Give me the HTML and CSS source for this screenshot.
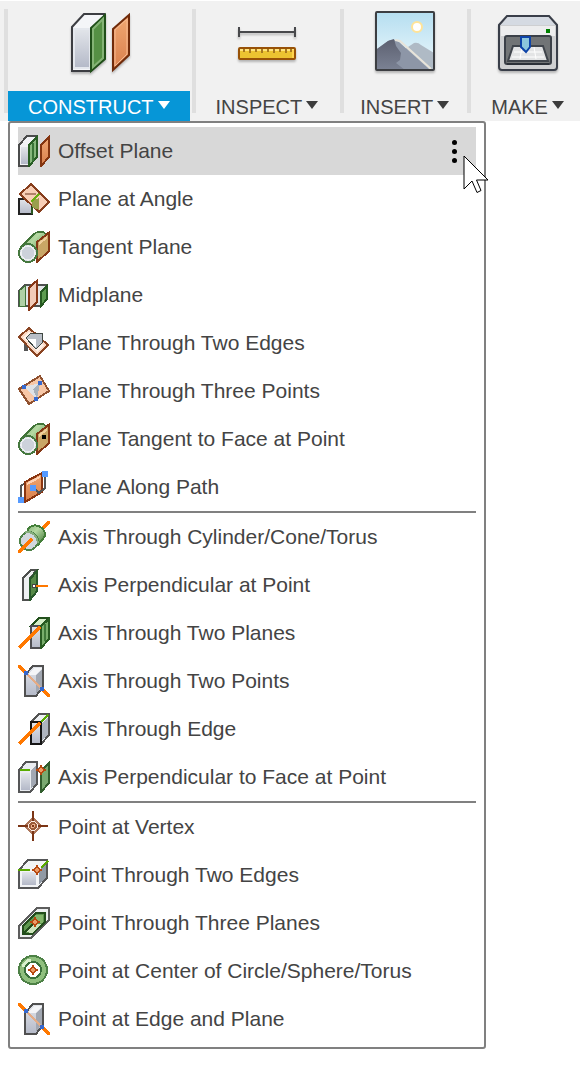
FILE: index.html
```html
<!DOCTYPE html>
<html lang="en">
<head>
  <meta charset="UTF-8">
  <meta name="viewport" content="width=device-width, initial-scale=1.0">
  <title>Construct Menu</title>
  <link rel="stylesheet" href="styles.css">
</head>
<body>
  <!-- shared gradients and symbols -->
  <svg class="defs" width="0" height="0" aria-hidden="true">
    <defs>
      <linearGradient id="steel" x1="0" y1="0" x2="0" y2="1"><stop offset="0" stop-color="#e2e5ea"/><stop offset="1" stop-color="#b4b9c8"/></linearGradient>
      <linearGradient id="copper" x1="0" y1="0" x2="0" y2="1"><stop offset="0" stop-color="#f0a873"/><stop offset="1" stop-color="#d97f4c"/></linearGradient>
      <linearGradient id="sky" x1="0" y1="0" x2="0" y2="1"><stop offset="0" stop-color="#b5def0"/><stop offset="1" stop-color="#eef9fd"/></linearGradient>
      <linearGradient id="rock" x1="0" y1="0" x2="0" y2="1"><stop offset="0" stop-color="#5c6070"/><stop offset="1" stop-color="#7b8294"/></linearGradient>
      <linearGradient id="tube" x1="0" y1="0" x2="1" y2="1"><stop offset="0" stop-color="#7fae70"/><stop offset=".4" stop-color="#b5d9a2"/><stop offset="1" stop-color="#39702f"/></linearGradient>
    </defs>
    <symbol id="target" viewBox="0 0 10 10">
      <path d="M5 0v10M0 5h10" stroke="#b8480f" stroke-width="2"/>
      <path d="M5 1.500 8.500 5 5 8.500 1.500 5z" fill="#eb9c68" stroke="#b8480f" stroke-width="2"/>
    </symbol>
    <symbol id="two-points" viewBox="0 0 32 32">
      <path d="M7 10 15 1H25V22L18 31H7z" fill="url(#steel)" stroke="#505050" stroke-width="2"/>
      <path d="M9 10 16 3h8l-6 7z" fill="#f4f5f7"/>
      <path d="M18 10 24 4v17l-6 8z" fill="#a1a7b1"/>
      <path d="M10 10 23 23" stroke="#e5ac85" stroke-width="2"/>
      <path d="M0 0 7 7M25 25l7 7" stroke="#ff7800" stroke-width="3"/>
      <path d="M6 6h4v4H6zM22 22h4v4h-4z" fill="#3569cf"/>
    </symbol>
    <symbol id="tangent" viewBox="0 0 32 32">
      <path d="M3 16 16 3Q20 0 25 1l3 2v13L16 29z" fill="url(#tube)" stroke="#417438" stroke-width="1.500"/>
      <path d="M19 11 31 1.500V20L19 31z" fill="#c9a666" stroke="#843714" stroke-width="2"/>
      <path d="M21 13 29 6" stroke="#f0ce9d" stroke-width="2"/>
      <circle cx="10" cy="22" r="9" fill="#cdd2db" stroke="#45783e" stroke-width="2"/>
      <circle cx="10" cy="22" r="7" fill="none" stroke="#edf0f2" stroke-width="1.500"/>
    </symbol>
  </svg>

  <nav class="toolbar" aria-label="Tools">
    <button class="tool tool--active" type="button">
      <svg class="tool__icon" viewBox="0 0 64 64">
        <path d="M5 16 17 3H37V48L24 60H5z" fill="#f4f5f8" stroke="#3c3d42" stroke-width="2"/>
        <path d="M7 18H23V57H7z" fill="url(#steel)" stroke="#e4e7ed" stroke-width="2"/>
        <path d="M24 17 38 4V48L24 60z" fill="#559044" stroke="#204f19" stroke-width="2"/>
        <path d="M26 18 36 8V47L26 56z" fill="none" stroke="#84b375" stroke-width="2"/>
        <path d="M46 18 62 4V44L46 59z" fill="url(#copper)" stroke="#702b0a" stroke-width="2"/>
        <path d="M48 19 60 8V43L48 55z" fill="none" stroke="#f6ba92" stroke-width="1"/>
      </svg>
      <span class="tool__label">CONSTRUCT <i class="caret"></i></span>
    </button>
    <button class="tool" type="button">
      <svg class="tool__icon" viewBox="0 0 64 64">
        <path d="M3 21H61M4 16V26M60 16V26" fill="none" stroke="#48494c" stroke-width="2"/>
        <rect x="4" y="37" width="56" height="11" rx="1" fill="#ecc331" stroke="#985207" stroke-width="2"/>
        <path d="M5 39H59" stroke="#ffe37d" stroke-width="2"/>
        <path d="M9 38v3M15 38v4M21 38v3M27 38v4M33 38v3M39 38v4M45 38v3M51 38v4M56 38v3" stroke="#a77720" stroke-width="2"/>
        <path d="M58 39V47" stroke="#ffd24e" stroke-width="2"/>
      </svg>
      <span class="tool__label">INSPECT <i class="caret"></i></span>
    </button>
    <button class="tool tool--narrow" type="button">
      <svg class="tool__icon" viewBox="0 0 64 64">
        <rect x="3" y="1" width="58" height="58" rx="1" fill="url(#sky)"/>
        <circle cx="44" cy="16" r="5" fill="#fff" stroke="#ffe398" stroke-width="2"/>
        <path d="M32 38 41 32Q45 31 48 34L61 42V58H32z" fill="#afbac5"/>
        <path d="M4 38 15 30Q20 27 26 31L57 59H4z" fill="#8d96a7"/>
        <path d="M4 38 15 30 21 28 23 35 28 42 27 49 23 52 32 59H4z" fill="url(#rock)"/>
        <path d="M22 29 27 30 58 58" fill="none" stroke="#e8e4da" stroke-width="2"/>
        <rect x="3" y="1" width="58" height="58" rx="1" fill="none" stroke="#3c3e42" stroke-width="2"/>
      </svg>
      <span class="tool__label">INSERT <i class="caret"></i></span>
    </button>
    <button class="tool" type="button">
      <svg class="tool__icon" viewBox="0 0 64 64">
        <path d="M3 14 11 5H53L61 14V56Q61 59 58 59H6Q3 59 3 56z" fill="#cecfd1" stroke="#393e49" stroke-width="2"/>
        <path d="M5 14 12 6H52L59 14z" fill="#d5dae2"/>
        <path d="M5 15H59V25H5z" fill="#ededee"/>
        <rect x="9" y="25" width="46" height="28" rx="2" fill="#717476" stroke="#3b4048" stroke-width="2"/>
        <path d="M12 50 17 35H47L52 50z" fill="#e3e4e5" stroke="#40454c" stroke-width="2"/>
        <path d="M18 41H46M16 46H48M26 36 24 48M38 36 40 48" fill="none" stroke="#fff"/>
        <path d="M25 26H34V36L30 41 25 36z" fill="#8cc6dc" stroke="#0d43a7" stroke-width="2"/>
        <path d="M11 53H53" stroke="#2b3038" stroke-width="2"/>
        <rect x="50" y="18" width="4" height="4" fill="#008000"/>
      </svg>
      <span class="tool__label">MAKE <i class="caret"></i></span>
    </button>
  </nav>

  <div class="menu" role="menu" aria-label="Construct">
    <div class="menu__group">
      <div class="menu__row menu__row--active">
        <button class="menu__item" type="button" role="menuitem">
          <svg class="menu__icon" viewBox="0 0 32 32">
            <path d="M1 10 9 1H19V22L11 31H1z" fill="#f1f2f5" stroke="#4b4c4c" stroke-width="2"/>
            <path d="M3 12h7v17H3z" fill="url(#steel)"/>
            <path d="M11 10 19 2V22L11 31z" fill="#86b77b" stroke="#285d23" stroke-width="2"/>
            <path d="M15 8V26" stroke="#397436" stroke-width="2"/>
            <path d="M23 10 31 2V22L23 31z" fill="url(#copper)" stroke="#843510" stroke-width="2"/>
          </svg>
          Offset Plane
        </button>
        <button class="more" type="button" aria-label="More options"><i></i><i></i><i></i></button>
        <svg class="cursor" viewBox="0 0 26 40" aria-hidden="true">
          <path d="M1 1V34L9 26 14 37.500 18 35.500 13.500 25H25z" fill="#fff" stroke="#000"/>
        </svg>
      </div>
      <div class="menu__row">
        <button class="menu__item" type="button" role="menuitem">
          <svg class="menu__icon" viewBox="0 0 32 32">
            <path d="M1 16H14V31H1z" fill="url(#steel)" stroke="#222" stroke-width="2"/>
            <path d="M13 1 31 19 21 29 2 11z" fill="#f8ceb6" stroke="#873e1d" stroke-width="2"/>
            <path d="M14 18 21 15V27L14 24z" fill="#9a9e4e"/>
            <path d="M7 11H18" stroke="#b18169" stroke-width="2"/>
            <path d="M13 19 21 11" stroke="#69ad11" stroke-width="2"/>
            <path d="M14 24V31" stroke="#28561f" stroke-width="2"/>
          </svg>
          Plane at Angle
        </button>
      </div>
      <div class="menu__row">
        <button class="menu__item" type="button" role="menuitem">
          <svg class="menu__icon"><use href="#tangent"/></svg>
          Tangent Plane
        </button>
      </div>
      <div class="menu__row">
        <button class="menu__item" type="button" role="menuitem">
          <svg class="menu__icon" viewBox="0 0 32 32">
            <path d="M1 12 7 6H29V20L23 27H1z" fill="#e2e5e8" stroke="#4f5150" stroke-width="2"/>
            <path d="M1 12 7 7V27H1z" fill="#afd0a6" stroke="#3f7339" stroke-width="1"/>
            <path d="M23 13 29 7V20L23 27z" fill="#5c9c4f" stroke="#255820" stroke-width="2"/>
            <path d="M11 9 19 1.500V23L11 31z" fill="#f1cbb8" stroke="#873716" stroke-width="2"/>
          </svg>
          Midplane
        </button>
      </div>
      <div class="menu__row">
        <button class="menu__item" type="button" role="menuitem">
          <svg class="menu__icon" viewBox="0 0 32 32">
            <path d="M6 16H10V24H6z" fill="#555"/>
            <path d="M11 1 30 18 19 29 1 10z" fill="#fbd8c3" stroke="#8a4422" stroke-width="2"/>
            <path d="M11 5 26 18 19 25 5 10z" fill="#fff1e8"/>
            <path d="M8 11 13 6H24V16L18 22z" fill="#b9bfc8" stroke="#3f4742" stroke-width="1"/>
            <path d="M9 12H18V20z" fill="#fff"/>
          </svg>
          Plane Through Two Edges
        </button>
      </div>
      <div class="menu__row">
        <button class="menu__item" type="button" role="menuitem">
          <svg class="menu__icon" viewBox="0 0 32 32">
            <path d="M22 1 31 16 11 29 1 14z" fill="#f7c7a7" stroke="#90512f" stroke-width="2"/>
            <path d="M6 12 22 8 19 24z" fill="#dfe2e6"/>
            <path d="M15 14 22 8 19 24z" fill="#a8b2bc"/>
            <path d="M4 10h4v4H4zM20 6h4v4h-4zM16 22h4v4h-4z" fill="#3569cf"/>
          </svg>
          Plane Through Three Points
        </button>
      </div>
      <div class="menu__row">
        <button class="menu__item" type="button" role="menuitem">
          <svg class="menu__icon" viewBox="0 0 32 32">
            <use href="#tangent"/>
            <path d="M24 12h4v4h-4z" fill="#000"/>
          </svg>
          Plane Tangent to Face at Point
        </button>
      </div>
      <div class="menu__row">
        <button class="menu__item" type="button" role="menuitem">
          <svg class="menu__icon" viewBox="0 0 32 32">
            <path d="M3 26V15L7 12" fill="none" stroke="#555" stroke-width="2"/>
            <path d="M7 11 24 2V21L7 31z" fill="url(#copper)" stroke="#8a3510" stroke-width="2"/>
            <path d="M9 13 22 6" stroke="#ffd3b6" stroke-width="2"/>
            <path d="M17 18 21 22 27 17V6" fill="none" stroke="#555" stroke-width="2"/>
            <path d="M0 26h6v6H0zM24 0h6v6h-6zM12 14h6v6h-6z" fill="#559aff"/>
          </svg>
          Plane Along Path
        </button>
      </div>
    </div>

    <div class="menu__group">
      <div class="menu__row">
        <button class="menu__item" type="button" role="menuitem">
          <svg class="menu__icon" viewBox="0 0 32 32">
            <path d="M32 0 23 9" stroke="#ff7800" stroke-width="3"/>
            <path d="M10 8Q14 3 21 5 28 9 27 15L20 24 8 15z" fill="url(#tube)" stroke="#437e39" stroke-width="2"/>
            <circle cx="11" cy="20" r="9" fill="#d2d7dd" stroke="#4e8248" stroke-width="2"/>
            <path d="M7 11Q18 10 20 22" fill="none" stroke="#86ae7d" stroke-width="2"/>
            <path d="M0 32 14 18" stroke="#ff7800" stroke-width="3"/>
          </svg>
          Axis Through Cylinder/Cone/Torus
        </button>
      </div>
      <div class="menu__row">
        <button class="menu__item" type="button" role="menuitem">
          <svg class="menu__icon" viewBox="0 0 32 32">
            <path d="M5 9 13 1H19L12 9V31H5z" fill="#eef0f2" stroke="#4e504e" stroke-width="2"/>
            <path d="M12 10 19 2V22L12 31z" fill="#568a48" stroke="#28592b" stroke-width="2"/>
            <circle cx="16" cy="17" r="2" fill="#fff" stroke="#444"/>
            <path d="M18 17H30" stroke="#ff7800" stroke-width="2"/>
          </svg>
          Axis Perpendicular at Point
        </button>
      </div>
      <div class="menu__row">
        <button class="menu__item" type="button" role="menuitem">
          <svg class="menu__icon" viewBox="0 0 32 32">
            <path d="M13 9 21 1H31L23 9z" fill="#d6efc9" stroke="#22501c" stroke-width="2"/>
            <path d="M13 9H23V31H13z" fill="url(#steel)" stroke="#4e4e52" stroke-width="2"/>
            <path d="M23 9 31 2V22L23 31z" fill="#79ae6c" stroke="#285b22" stroke-width="2"/>
            <path d="M27 7V24" stroke="#3f7839" stroke-width="2"/>
            <path d="M1 31 22 10" stroke="#ff7800" stroke-width="3"/>
          </svg>
          Axis Through Two Planes
        </button>
      </div>
      <div class="menu__row">
        <button class="menu__item" type="button" role="menuitem">
          <svg class="menu__icon"><use href="#two-points"/></svg>
          Axis Through Two Points
        </button>
      </div>
      <div class="menu__row">
        <button class="menu__item" type="button" role="menuitem">
          <svg class="menu__icon" viewBox="0 0 32 32">
            <path d="M13 9 21 1H31V22L23 31H13z" fill="#edf0f3" stroke="#535353" stroke-width="2"/>
            <path d="M13 9H23V31H13z" fill="url(#steel)" stroke="#151515" stroke-width="2"/>
            <path d="M24 10 30 4V21L24 28z" fill="#afb5bf"/>
            <path d="M23 9 30 2" stroke="#58ac00" stroke-width="2"/>
            <path d="M1 31 22 10" stroke="#ff7800" stroke-width="3"/>
          </svg>
          Axis Through Edge
        </button>
      </div>
      <div class="menu__row">
        <button class="menu__item" type="button" role="menuitem">
          <svg class="menu__icon" viewBox="0 0 32 32">
            <path d="M1 9 8 1H19V23L12 31H1z" fill="#eaedf1" stroke="#555657" stroke-width="2"/>
            <path d="M3 12h9v17H3z" fill="url(#steel)"/>
            <path d="M13 9 18 4V22L13 28z" fill="#a2a8b3"/>
            <path d="M2 9H12" stroke="#58ac00" stroke-width="2"/>
            <path d="M23 10 31 2V22L23 31z" fill="#79aa70" stroke="#315e2d" stroke-width="2"/>
            <use href="#target" x="18" y="4" width="10" height="10"/>
          </svg>
          Axis Perpendicular to Face at Point
        </button>
      </div>
    </div>

    <div class="menu__group">
      <div class="menu__row">
        <button class="menu__item" type="button" role="menuitem">
          <svg class="menu__icon" viewBox="0 0 32 32">
            <path d="M15 7 23 15 15 23 7 15z" fill="#fff0e7" stroke="#ad765a" stroke-width="2"/>
            <circle cx="15" cy="15" r="3" fill="#edb28e" stroke="#9c5c39" stroke-width="2"/>
            <path d="M15 0V10M15 20V30M0 15H10M20 15H30" stroke="#7c3515" stroke-width="2"/>
            <path d="M14 14h2v2h-2z" fill="#7c3515"/>
          </svg>
          Point at Vertex
        </button>
      </div>
      <div class="menu__row">
        <button class="menu__item" type="button" role="menuitem">
          <svg class="menu__icon" viewBox="0 0 32 32">
            <path d="M1 11 10 1H29V19L20 29H1z" fill="#f2f4f6" stroke="#555657" stroke-width="2"/>
            <path d="M4 13H18V26H4z" fill="url(#steel)"/>
            <path d="M21 11 28 4V18L21 26z" fill="#919aa5"/>
            <path d="M0 11H12M23 9 30 2" stroke="#58a800" stroke-width="2"/>
            <use href="#target" x="14" y="6" width="10" height="10"/>
          </svg>
          Point Through Two Edges
        </button>
      </div>
      <div class="menu__row">
        <button class="menu__item" type="button" role="menuitem">
          <svg class="menu__icon" viewBox="0 0 32 32">
            <path d="M1 19 19 1H31V13L13 31H1z" fill="#eef0f1" stroke="#5d5d5d" stroke-width="2"/>
            <path d="M5 19 18 6H27V15L14 27H5z" fill="#5e984f" stroke="#234d1c" stroke-width="2"/>
            <path d="M7 25 15 17H24L14 26z" fill="#cce4bb"/>
            <path d="M17 8h8v8h-8z" fill="#85b66c"/>
            <path d="M6 26 15 17" stroke="#234d1c" stroke-width="2"/>
            <use href="#target" x="12" y="10" width="10" height="10"/>
          </svg>
          Point Through Three Planes
        </button>
      </div>
      <div class="menu__row">
        <button class="menu__item" type="button" role="menuitem">
          <svg class="menu__icon" viewBox="0 0 32 32">
            <circle cx="15" cy="15" r="11" fill="#fff" stroke="#8fbf7d" stroke-width="7"/>
            <circle cx="15" cy="15" r="14" fill="none" stroke="#4d8146" stroke-width="2"/>
            <circle cx="15" cy="15" r="8" fill="none" stroke="#39703a" stroke-width="2"/>
            <path d="M5 12Q7 6 13 5" fill="none" stroke="#d9f0cd" stroke-width="3"/>
            <use href="#target" x="10" y="10" width="10" height="10"/>
          </svg>
          Point at Center of Circle/Sphere/Torus
        </button>
      </div>
      <div class="menu__row">
        <button class="menu__item" type="button" role="menuitem">
          <svg class="menu__icon"><use href="#two-points"/></svg>
          Point at Edge and Plane
        </button>
      </div>
    </div>
  </div>
</body>
</html>
```

FILE: styles.css
```css
* {
  box-sizing: border-box;
}

body {
  margin: 0;
  background: #fff;
  color: #444;
  font-family: "Liberation Sans", Arial, sans-serif;
  font-size: 21px;
  line-height: 30px;
  overflow-x: hidden;
}

button {
  margin: 0;
  padding: 0;
  border: 0;
  background: none;
  color: inherit;
  font: inherit;
}

.defs {
  position: absolute;
}

/* Toolbar */
.toolbar {
  display: flex;
  height: 120px;
  margin-top: 1px;
  padding-left: 4px;
  background: #f1f1f1;
}

.tool {
  display: flex;
  flex: none;
  flex-direction: column;
  align-items: stretch;
  padding: 0 2px 0 4px;
  background: linear-gradient(#dfdfdf, #dfdfdf) 0 8px / 4px 104px no-repeat;
}

.tool__icon {
  width: 64px;
  height: 64px;
  margin: 10px auto 16px;
  filter: drop-shadow(0 2px 1px rgba(0, 0, 0, 0.25));
}

.tool__label {
  display: flex;
  align-items: center;
  gap: 4px;
  height: 30px;
  padding: 2px 20px 0;
  font-size: 20px;
  white-space: nowrap;
}

.tool--narrow .tool__label {
  padding-left: 16px;
  padding-right: 16px;
}

.tool--active .tool__label {
  background: #0696d7;
  color: #fff;
}

.caret {
  border: 6px solid transparent;
  border-top: 8px solid #3c3c3c;
  border-bottom: 0;
  margin-bottom: 4px;
}

.tool--active .caret {
  border-top-color: #fff;
}

/* Drop-down menu */
.menu {
  max-width: 478px;
  margin: 0 8px;
  padding: 4px 8px;
  border: 2px solid #808080;
  border-radius: 3px;
  background: #fff;
}

.menu__group + .menu__group {
  border-top: 2px solid #808080;
}

.menu__row {
  position: relative;
  display: flex;
  height: 48px;
}

.menu__row--active {
  background: #d8d8d8;
}

.menu__item {
  display: flex;
  flex: 1;
  align-items: center;
  gap: 8px;
  text-align: left;
  white-space: nowrap;
}

.menu__icon {
  flex: none;
  width: 32px;
  height: 32px;
  shape-rendering: crispEdges;
}

.more {
  display: flex;
  flex-direction: column;
  align-items: center;
  justify-content: center;
  gap: 4px;
  width: 44px;
}

.more i {
  width: 5px;
  height: 5px;
  border-radius: 50%;
  background: #000;
}

.cursor {
  position: absolute;
  top: 28px;
  right: -13px;
  width: 26px;
  height: 40px;
}
```
